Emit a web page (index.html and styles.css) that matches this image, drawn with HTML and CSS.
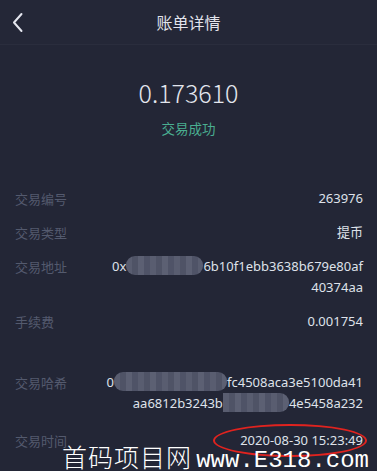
FILE: index.html
```html
<!DOCTYPE html>
<html lang="zh">
<head>
<meta charset="utf-8">
<title>账单详情</title>
<link rel="stylesheet" href="styles.css">
</head>
<body>
<div class="screen">
  <header class="topbar">
    <span class="back">
      <svg width="14" height="22" viewBox="0 0 14 22"><path d="M10.5 3 L3 11.5 L10.5 20" fill="none" stroke="#e4e6ee" stroke-width="2" stroke-linecap="round" stroke-linejoin="round"/></svg>
    </span>
    <h1 class="title">账单详情</h1>
    <span class="spacer"></span>
  </header>

  <section class="summary">
    <div class="amount">0.173610</div>
    <div class="status">交易成功</div>
  </section>

  <section class="details">
    <div class="row">
      <span class="label">交易编号</span>
      <span class="value">263976</span>
    </div>
    <div class="row">
      <span class="label">交易类型</span>
      <span class="value">提币</span>
    </div>
    <div class="row">
      <span class="label">交易地址</span>
      <span class="value">0x<span class="mosaic m-addr"></span>6b10f1ebb3638b679e80af<br>40374aa</span>
    </div>
    <div class="row">
      <span class="label">手续费</span>
      <span class="value">0.001754</span>
    </div>
    <div class="row row-hash">
      <span class="label">交易哈希</span>
      <span class="value">0<span class="mosaic m-hash1"></span>fc4508aca3e5100da41<br>aa6812b3243b<span class="mosaic m-hash2"></span>4e5458a232</span>
    </div>
    <div class="row row-time">
      <span class="label">交易时间</span>
      <span class="value">2020-08-30 15:23:49</span>
    </div>
  </section>

  <div class="circle"></div>
  <div class="watermark"><span class="wm-cn">首码项目网</span> <span class="wm-en">www.E318.com</span></div>
</div>
</body>
</html>
```

FILE: styles.css
```css
html, body {
  margin: 0;
  padding: 0;
}
body {
  background: #232636;
  font-family: "Noto Sans", "Noto Sans CJK SC", sans-serif;
}
.screen {
  position: relative;
  width: 377px;
  height: 471px;
  overflow: hidden;
  background: #232636;
}
.topbar {
  height: 44px;
  display: grid;
  grid-template-columns: 44px 1fr 44px;
  align-items: center;
  border-bottom: 1px solid #2a2d3d;
  background: #242737;
}
.back {
  display: flex;
  align-items: center;
  padding-left: 11px;
  height: 44px;
}
.back svg {
  display: block;
}
.title {
  margin: 0;
  text-align: center;
  font-family: "Noto Sans CJK SC", sans-serif;
  font-size: 16px;
  font-weight: 400;
  color: #e2e4ec;
  line-height: 44px;
}
.summary {
  display: flex;
  flex-direction: column;
  align-items: center;
  padding-top: 32px;
}
.amount {
  font-family: "Noto Sans CJK SC", "Noto Sans", sans-serif;
  font-size: 25px;
  font-weight: 300;
  line-height: 30px;
  color: #e3e6ee;
}
.status {
  margin-top: 11px;
  font-family: "Noto Sans CJK SC", sans-serif;
  font-size: 13.5px;
  line-height: 20px;
  color: #4aae91;
}
.details {
  padding: 50px 14px 0 15px;
}
.row {
  display: flex;
  justify-content: space-between;
  align-items: flex-start;
  font-size: 13px;
  line-height: 21px;
  margin-bottom: 13px;
}
.row-hash {
  margin-top: 40px;
  margin-bottom: 16px;
}
.label {
  font-family: "Noto Sans CJK SC", sans-serif;
  color: #545a6e;
  flex: none;
}
.value {
  color: #dfe2ea;
  text-align: right;
  white-space: nowrap;
}
.mosaic {
  display: inline-block;
  vertical-align: -4px;
  height: 19px;
  border-radius: 9px;
  background:
    linear-gradient(90deg, rgba(255,255,255,0.04) 0 25%, rgba(0,0,0,0.04) 25% 50%, rgba(255,255,255,0.06) 50% 75%, rgba(0,0,0,0.03) 75%),
    #52566a;
  background-size: 24px 100%, auto;
}
.m-addr {
  width: 77px;
}
.m-hash1 {
  width: 113px;
}
.m-hash2 {
  width: 66px;
  border-radius: 0 9px 9px 0;
}
.circle {
  position: absolute;
  left: 213px;
  top: 424px;
  width: 154px;
  height: 33px;
  border: 2px solid #e0231f;
  border-radius: 50%;
  box-sizing: border-box;
}
.watermark {
  position: absolute;
  left: 62px;
  top: 441px;
  white-space: nowrap;
  color: #ffffff;
  line-height: 30px;
}
.wm-cn {
  font-family: "Noto Sans CJK SC", sans-serif;
  font-weight: 200;
  font-size: 25px;
  letter-spacing: 1px;
}
.wm-en {
  font-family: "Liberation Mono", monospace;
  font-size: 24px;
}
```
